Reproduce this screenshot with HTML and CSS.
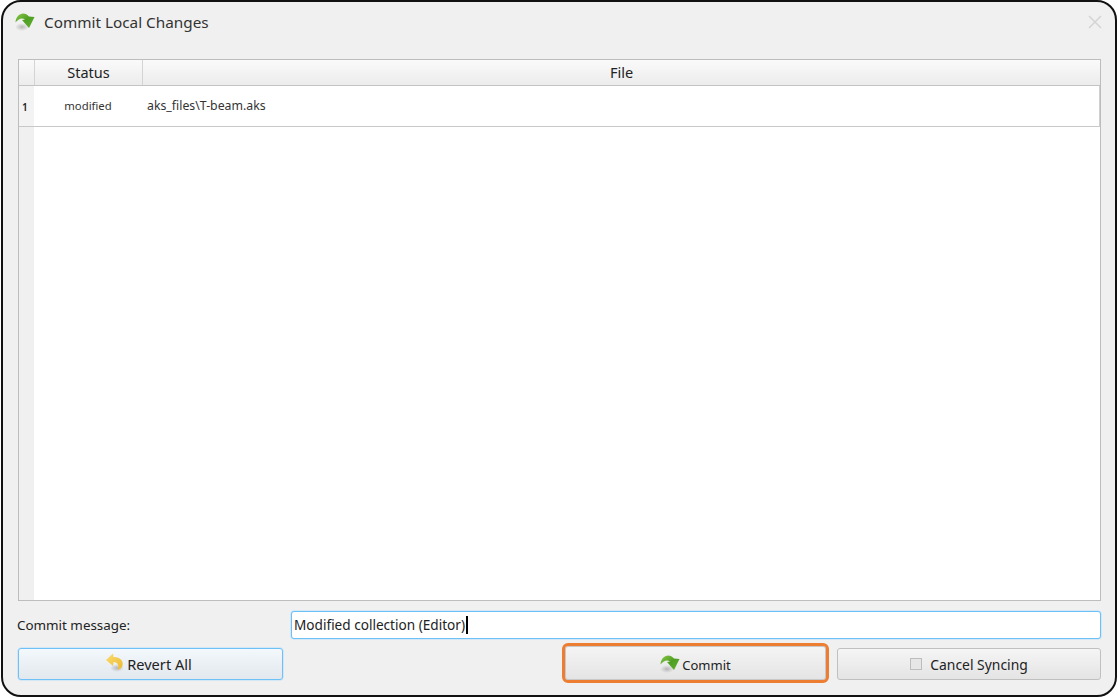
FILE: index.html
```html
<!DOCTYPE html>
<html lang="en">
<head>
<meta charset="utf-8">
<title>Commit Local Changes</title>
<link rel="stylesheet" href="styles.css">
</head>
<body>
<div class="window">
  <svg class="defs" width="0" height="0"><defs>
    <radialGradient id="sh"><stop offset="0" stop-color="#888" stop-opacity=".55"/><stop offset="1" stop-color="#999" stop-opacity="0"/></radialGradient>
    <linearGradient id="gr" x1="0" y1="0" x2="1" y2="1"><stop offset="0" stop-color="#8cc84b"/><stop offset=".5" stop-color="#4f9f23"/><stop offset="1" stop-color="#5fb02c"/></linearGradient>
    <linearGradient id="ye" x1="0" y1="0" x2="1" y2="1"><stop offset="0" stop-color="#f9dc72"/><stop offset="1" stop-color="#eeb92c"/></linearGradient>
  </defs></svg>
  <header class="titlebar">
    <svg class="icon-title" viewBox="0 0 20 20"><ellipse cx="7" cy="15" rx="7" ry="4" fill="url(#sh)"/><path d="M0.500 10.500C0.500 2.500 9 -2 14 4.500L19.500 5L14 16L7 8L10 7.500C7 5 3 7 0.500 10.500Z" fill="url(#gr)"/></svg>
    <span class="title">Commit Local Changes</span>
    <svg class="close" viewBox="0 0 14 14"><path d="M1 1L13 13M13 1L1 13" stroke="#d4d4d4" stroke-width="1.500" fill="none"/></svg>
  </header>
  <div class="table">
    <div class="head">
      <div class="corner"></div>
      <div class="hcell status">Status</div>
      <div class="hcell file">File</div>
    </div>
    <div class="body">
      <div class="gutter"><div class="rownum">1</div></div>
      <div class="rows">
        <div class="row">
          <div class="cell status-c">modified</div>
          <div class="cell file-c">aks_files\T-beam.aks</div>
        </div>
      </div>
    </div>
  </div>
  <div class="message">
    <label class="msg-label">Commit message:</label>
    <div class="input">Modified collection (Editor)<span class="caret"></span></div>
  </div>
  <div class="actions">
    <button class="btn revert"><svg class="icon" viewBox="0 0 20 20"><ellipse cx="12" cy="15" rx="7" ry="4" fill="url(#sh)"/><path d="M1 7L8 0.500L8.500 4C14 3.500 19 7.500 17.500 12.500C17 14.500 15 16.500 12.500 17C14.500 13.500 13 9 8.500 9L8 13Z" fill="url(#ye)"/></svg>Revert All</button>
    <div class="spacer"></div>
    <button class="btn commit"><svg class="icon" viewBox="0 0 20 20"><ellipse cx="7" cy="15" rx="7" ry="4" fill="url(#sh)"/><path d="M0.500 10.500C0.500 2.500 9 -2 14 4.500L19.500 5L14 16L7 8L10 7.500C7 5 3 7 0.500 10.500Z" fill="url(#gr)"/></svg>Commit</button>
    <button class="btn cancel"><span class="check"></span>Cancel Syncing</button>
  </div>
</div>
</body>
</html>
```
FILE: styles.css
```css
html, body { margin: 0; padding: 0; background: #fff; }
body { font-family: "Noto Sans", "Open Sans", sans-serif; color: #222; }
.defs { display: block; height: 0; flex: none; }
.window {
  box-sizing: border-box;
  width: 1116px;
  height: 697px;
  margin: 0 0 0 1px;
  border: 2px solid #111;
  border-radius: 20px;
  background: #f0f0f0;
  display: flex;
  flex-direction: column;
  padding: 0 14px 14px 14px;
  overflow: hidden;
}
.titlebar { display: flex; align-items: center; height: 57px; padding-bottom: 17px; box-sizing: border-box; flex: none; }
.icon-title { width: 20px; height: 20px; margin: -1px 9px 0 -2px; }
.title { font-size: 15.300px; color: #333; }
.close { width: 14px; height: 14px; margin-left: auto; margin-right: -1px; }
.table { flex: none; height: 542px; box-sizing: border-box; border: 1px solid #bdbdbd; background: #f0f0f0; display: flex; flex-direction: column; margin-left: 1px; }
.head { display: flex; height: 25px; flex: none; background: linear-gradient(#fafafa, #ececec); border-bottom: 1px solid #c4c4c4; }
.corner { width: 15px; flex: none; }
.hcell { font-size: 14.500px; text-align: center; line-height: 25px; color: #222; border-left: 1px solid #d4d4d4; }
.hcell.status { width: 108px; flex: none; box-sizing: border-box; }
.hcell.file { flex: 1; }
.body { flex: 1; display: flex; min-height: 0; }
.gutter { width: 15px; flex: none; background: #f0f0f0; }
.rownum { height: 40px; border-bottom: 1px solid #c8c8c8; font-size: 10px; font-weight: 600; line-height: 42px; padding-left: 3px; background: #f3f3f3; border-right: 1px solid #ddd; margin-right: -1px; color: #222; }
.rows { flex: 1; background: #fff; }
.row { display: flex; height: 40px; border-bottom: 1px solid #c8c8c8; border-right: 1px solid #d0d0d0; }
.cell { font-size: 12.300px; line-height: 39px; color: #333; }
.status-c { width: 108px; flex: none; text-align: center; font-size: 11.300px; }
.file-c { flex: 1; padding-left: 5px; }
.message { display: flex; align-items: center; height: 28px; margin-top: 10px; flex: none; }
.msg-label { width: 274px; flex: none; font-size: 13.400px; color: #222; }
.input { box-sizing: border-box; width: 810px; height: 28px; border: 1px solid #6ec1f7; box-shadow: 0 0 0 0.500px #b5defa; border-radius: 3px; background: #fff; font-size: 13.600px; line-height: 26px; padding-left: 2px; color: #222; }
.caret { display: inline-block; width: 1.500px; height: 18px; background: #000; vertical-align: -4px; margin-left: 1px; }
.actions { display: flex; height: 32px; margin-top: 9px; flex: none; margin-left: 1px; }
.spacer { width: 279px; flex: none; }
.btn { box-sizing: border-box; height: 32px; display: flex; align-items: center; justify-content: center; font-family: inherit; font-size: 13.900px; color: #222; border: 1px solid #c0c0c0; border-radius: 3px; background: linear-gradient(#f5f5f5, #e4e4e4); padding: 0; }
.revert { width: 265px; border-color: #6ec1f7; box-shadow: 0 0 0 0.500px #b5defa; background: linear-gradient(#f3f8fc, #e3e8ee); font-size: 14.600px; padding-right: 4px; }
.commit { width: 267px; border: 3px solid #ed7d31; border-radius: 6px; margin: -5px 0 -3px; height: 40px; box-shadow: inset 0 0 0 1px #c8c8c8; font-size: 13px; padding-top: 4px; }
.cancel { width: 264px; margin-left: 8px; }
.icon { width: 20px; height: 20px; margin: -2px 2px 0 0; }
.check { width: 10px; height: 10px; border: 1px solid #bdbdbd; background: #e6e6e6; margin: -1px 8px 0 0; }
```
